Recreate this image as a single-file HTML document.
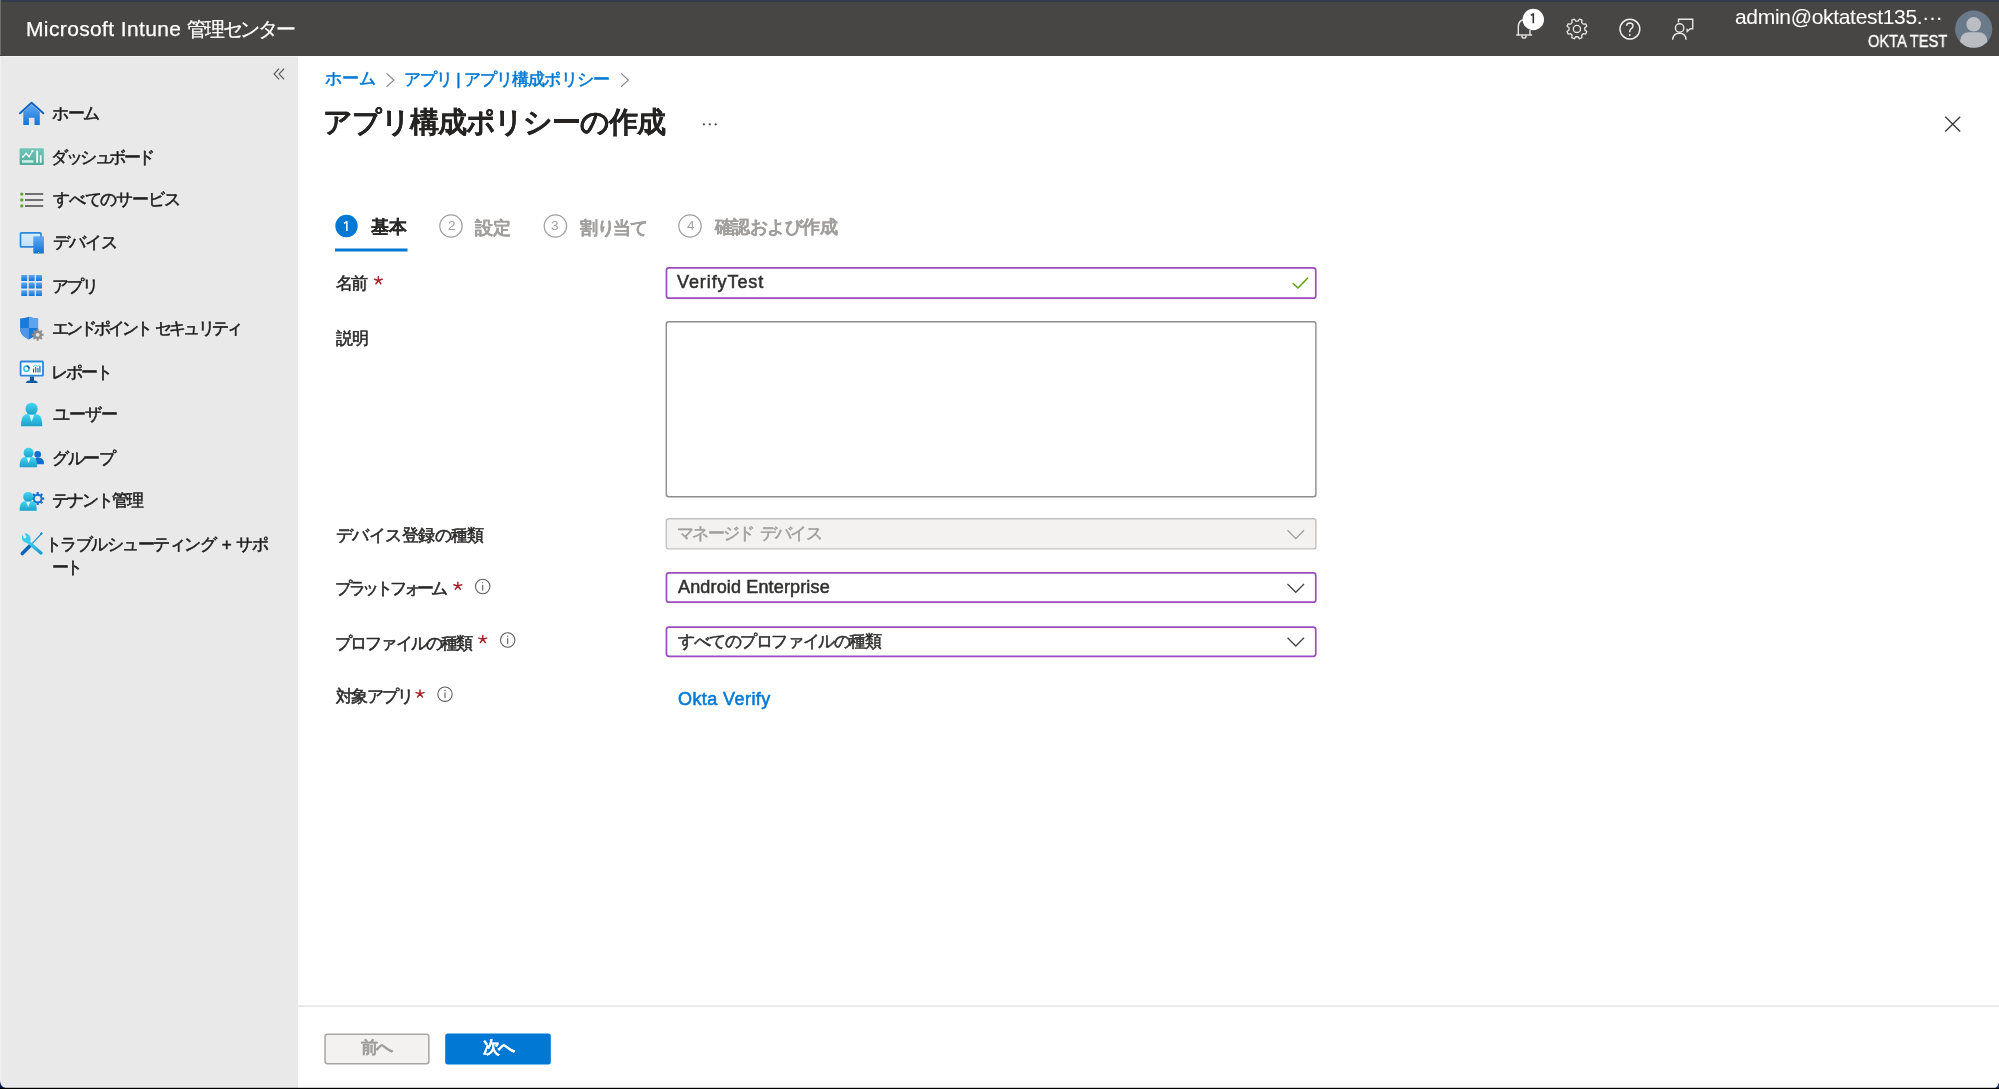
<!DOCTYPE html>
<html lang="ja">
<head>
<meta charset="utf-8">
<style>
html,body{margin:0;padding:0;}
body{width:1999px;height:1089px;overflow:hidden;position:relative;background:#fff;font-family:"Liberation Sans",sans-serif;color:#323130;}
.a{position:absolute;white-space:nowrap;line-height:1;will-change:transform;-webkit-text-stroke:0.55px currentColor;}
.s{position:absolute;}
.box{position:absolute;box-sizing:border-box;border-radius:2px;}
.pbox{border:1.8px solid #9c4cbe;background:#fff;border-radius:3px;}
</style>
</head>
<body>
<div class="s" style="left:0;top:0;width:1999px;height:55.5px;background:#484644;"></div>
<div class="s" style="left:0;top:0;width:1999px;height:2px;background:#343b4c;"></div>
<div class="s" style="left:0;top:0;width:1px;height:55px;background:#706f6e;"></div>
<div class="s" style="left:0;top:55.5px;width:298px;height:1034px;background:#e9e9e9;"></div>
<div class="s" style="left:0;top:55.5px;width:298px;height:1px;background:#f2f2f2;"></div>
<!-- form boxes: see svg -->
<svg class="s" style="left:0;top:0" width="1999" height="1089" viewBox="0 0 1999 1089">
<defs>
 <linearGradient id="gBlue" x1="0" y1="0" x2="0" y2="1"><stop offset="0" stop-color="#62a8f2"/><stop offset="1" stop-color="#0f74d6"/></linearGradient>
 <linearGradient id="gTeal" x1="0" y1="0" x2="0" y2="1"><stop offset="0" stop-color="#70c8b8"/><stop offset="1" stop-color="#52aa9b"/></linearGradient>
 <linearGradient id="gCyan" x1="0" y1="0" x2="0" y2="1"><stop offset="0" stop-color="#44d6f2"/><stop offset="1" stop-color="#1c9fcb"/></linearGradient>
 <linearGradient id="gLight" x1="0" y1="0" x2="0" y2="1"><stop offset="0" stop-color="#d8eefc"/><stop offset="1" stop-color="#c2e0f8"/></linearGradient>
</defs>
<!-- form boxes -->
<rect x="666.45" y="267.85" width="649.30" height="30.30" rx="2.5" fill="#fff" stroke="#9c4cbe" stroke-width="1.7"/>
<rect x="666.30" y="321.70" width="649.60" height="175.10" rx="2.5" fill="#fff" stroke="#8f8d8b" stroke-width="1.4"/>
<rect x="666.30" y="518.70" width="649.60" height="30.20" rx="2.5" fill="#f3f2f1" stroke="#c3c1bf" stroke-width="1.4"/>
<rect x="666.45" y="572.85" width="649.30" height="29.30" rx="2.5" fill="#fff" stroke="#9c4cbe" stroke-width="1.7"/>
<rect x="666.45" y="627.05" width="649.30" height="29.30" rx="2.5" fill="#fff" stroke="#9c4cbe" stroke-width="1.7"/>
<rect x="298" y="1005.3" width="1701" height="1.6" fill="#e6e4e2"/>
<rect x="325.05" y="1034.15" width="103.80" height="29.70" rx="2.5" fill="#f3f2f1" stroke="#a8a6a4" stroke-width="1.5"/>
<rect x="445.2" y="1033.4" width="105.6" height="31.2" rx="2.5" fill="#0078d4"/>
<!-- sidebar collapse << -->
<g fill="none" stroke="#605e5c" stroke-width="1.1" stroke-linecap="round">
 <path d="M278.8 69 L274 74 L278.8 79"/><path d="M283.8 69 L279 74 L283.8 79"/>
</g>
<!-- home -->
<path d="M23.3 112 L23.3 125.1 L39.8 125.1 L39.8 112 L31.6 104.5 Z" fill="url(#gBlue)"/>
<path d="M20 113.3 L31.6 102.8 L43.3 113.3" fill="none" stroke="#0b63c1" stroke-width="1.9" stroke-linejoin="round" stroke-linecap="round"/>
<rect x="28.9" y="117.8" width="5.6" height="7.4" fill="#e4e4e4"/>
<!-- dashboard -->
<rect x="19.6" y="148.2" width="24.2" height="16.9" rx="1" fill="url(#gTeal)"/>
<polyline points="22.9,156.8 26.2,153.5 29.2,156.5 32.5,150.9" fill="none" stroke="#fff" stroke-width="1.1"/>
<g fill="#fff"><circle cx="22.9" cy="156.8" r="1"/><circle cx="26.2" cy="153.5" r="1"/><circle cx="29.2" cy="156.5" r="1"/><circle cx="32.5" cy="150.9" r="1"/></g>
<rect x="22" y="160.1" width="11.5" height="2.7" fill="#c9ebe5"/>
<rect x="36.2" y="150.6" width="1.9" height="12.2" fill="#f4fbfa"/>
<rect x="39.8" y="155.2" width="1.8" height="7.6" fill="#f4fbfa"/>
<!-- all services list -->
<g fill="#5fa82e"><circle cx="21.8" cy="194.1" r="1.7"/><circle cx="21.8" cy="200" r="1.7"/><circle cx="21.8" cy="205.9" r="1.7"/></g>
<g stroke="#707070" stroke-width="2"><path d="M25 194.1H43.2M25 200H43.2M25 205.9H43.2"/></g>
<!-- devices -->
<rect x="20.5" y="232.9" width="20.5" height="14" rx="1" fill="url(#gLight)" stroke="#2a87dc" stroke-width="1.7"/>
<rect x="33.3" y="236.2" width="10.6" height="17.3" rx="0.6" fill="url(#gBlue)"/>
<circle cx="38.6" cy="252.5" r="0.6" fill="#fff"/>
<!-- apps grid -->
<g fill="url(#gBlue)">
<rect x="21.3" y="274.9" width="5.9" height="6" rx="0.5"/><rect x="28.7" y="274.9" width="6" height="6" rx="0.5"/><rect x="36" y="274.9" width="6" height="6" rx="0.5"/>
<rect x="21.3" y="282.6" width="5.9" height="5.9" rx="0.5"/><rect x="28.7" y="282.6" width="6" height="5.9" rx="0.5"/><rect x="36" y="282.6" width="6" height="5.9" rx="0.5"/>
<rect x="21.3" y="290.2" width="5.9" height="5.9" rx="0.5"/><rect x="28.7" y="290.2" width="6" height="5.9" rx="0.5"/><rect x="36" y="290.2" width="6" height="5.9" rx="0.5"/>
</g>
<!-- shield -->
<path d="M20.1 318.6 Q24.5 318.6 28.9 316.8 Q33.3 318.6 38.1 318.6 L38.1 329 Q38 335.5 28.9 339.5 Q20.2 335.5 20.1 329 Z" fill="#1a7ad9"/>
<path d="M28.9 316.8 Q33.3 318.6 38.1 318.6 L38.1 328 L28.9 328 Z" fill="#5ea3ec"/>
<path d="M20.1 328 L28.9 328 L28.9 339.5 Q20.2 335.5 20.1 329 Z" fill="#4f97e6"/>
<path d="M36.67 330.52 L36.76 328.87 L38.64 328.87 L38.73 330.52 L40.00 331.05 L41.23 329.95 L42.55 331.27 L41.45 332.50 L41.98 333.77 L43.63 333.86 L43.63 335.74 L41.98 335.83 L41.45 337.10 L42.55 338.33 L41.23 339.65 L40.00 338.55 L38.73 339.08 L38.64 340.73 L36.76 340.73 L36.67 339.08 L35.40 338.55 L34.17 339.65 L32.85 338.33 L33.95 337.10 L33.42 335.83 L31.77 335.74 L31.77 333.86 L33.42 333.77 L33.95 332.50 L32.85 331.27 L34.17 329.95 L35.40 331.05 Z" fill="#8c8c8c"/><circle cx="37.7" cy="334.8" r="1.9" fill="#e9e9e9"/>
<!-- report -->
<rect x="20.6" y="361.5" width="22.4" height="14.2" rx="0.8" fill="#fff" stroke="#2a87dc" stroke-width="1.8"/>
<path d="M29.9 376.5 H34 V380.6 Q37.7 381 37.7 383 H25.9 Q25.9 381 29.9 380.6 Z" fill="#0c5aa6"/>
<circle cx="26.5" cy="368.7" r="2.6" fill="none" stroke="#32c1ec" stroke-width="1.5"/>
<path d="M26.5 366.1 A2.6 2.6 0 0 1 29.1 368.7" fill="none" stroke="#0a5aa6" stroke-width="1.5"/>
<g fill="#0c5aa6"><rect x="33" y="368.5" width="1.1" height="4"/><rect x="35.2" y="367" width="1.1" height="5.5"/><rect x="37.4" y="368" width="1.1" height="4.5"/><rect x="39.4" y="366" width="1.1" height="6.5"/></g>
<path d="M33 367 L35.5 365 L37.8 366.5 L40 364.3" fill="none" stroke="#32c1ec" stroke-width="0.9"/>
<!-- user -->
<circle cx="31.6" cy="408.9" r="6.1" fill="url(#gCyan)"/>
<path d="M21.1 426.2 L21.1 423 Q21.5 414.5 27.5 414 L35.7 414 Q41.8 414.5 42.2 423 L42.2 426.2 Z" fill="url(#gCyan)"/>
<path d="M29.2 415 L34 415 L31.6 421.8 Z" fill="#e4f8fd"/>
<!-- groups -->
<circle cx="37.7" cy="454.4" r="3.3" fill="#0f6fd0"/>
<path d="M34.3 464.2 L34.3 462 Q34.8 457.8 37 457.8 L39.5 457.8 Q43.5 458.2 43.9 462.5 L43.9 464.2 Z" fill="#0f6fd0"/>
<circle cx="28.6" cy="452.7" r="5" fill="url(#gCyan)"/>
<path d="M19.7 467.3 L19.7 464 Q20.2 457.3 25 457 L32 457 Q36.7 457.5 37.1 464 L37.1 467.3 Z" fill="url(#gCyan)"/>
<path d="M26.6 457.8 L30.6 457.8 L28.6 463 Z" fill="#e4f8fd"/>
<!-- tenant -->
<path d="M36.58 493.93 L36.67 492.08 L38.73 492.08 L38.82 493.93 L40.21 494.51 L41.58 493.26 L43.04 494.72 L41.79 496.09 L42.37 497.48 L44.22 497.57 L44.22 499.63 L42.37 499.72 L41.79 501.11 L43.04 502.48 L41.58 503.94 L40.21 502.69 L38.82 503.27 L38.73 505.12 L36.67 505.12 L36.58 503.27 L35.19 502.69 L33.82 503.94 L32.36 502.48 L33.61 501.11 L33.03 499.72 L31.18 499.63 L31.18 497.57 L33.03 497.48 L33.61 496.09 L32.36 494.72 L33.82 493.26 L35.19 494.51 Z" fill="#0f6fd0"/><circle cx="37.7" cy="498.6" r="2.9" fill="#e9e9e9"/>
<circle cx="28.2" cy="496.9" r="5" fill="url(#gCyan)"/>
<path d="M19.7 510.8 L19.7 508 Q20.2 501.6 25 501.3 L32 501.3 Q36.3 501.8 36.7 508 L36.7 510.8 Z" fill="url(#gCyan)"/>
<path d="M26.2 502 L30.2 502 L28.2 507 Z" fill="#e4f8fd"/>
<!-- tools -->
<path d="M30.5 545.3 L22.3 553.5" stroke="#0f64b8" stroke-width="3.6" stroke-linecap="round"/>
<path d="M31 544.8 L41.6 533.5" stroke="#1e8fcf" stroke-width="1.1"/>
<path d="M40.5 534.3 L42.2 532.8" stroke="#1e8fcf" stroke-width="2"/>
<path d="M26.5 540.5 L41 553" stroke="url(#gCyan)" stroke-width="3.3" stroke-linecap="round"/>
<path d="M22.5 534.5 Q21 539 23.5 541.5 Q26.5 544 30 542 Q31.5 538.5 29.5 535.5 Q27.2 533 24.5 533.2 L26.5 536.8 L25.5 538.5 L23.7 538.3 Z" fill="#3bcdef"/>

<!-- breadcrumb chevrons -->
<g fill="none" stroke="#8a8886" stroke-width="1.2">
<path d="M386.6 73.4 L393.8 80.1 L386.6 86.7"/><path d="M621.1 73.4 L628.3 80.1 L621.1 86.7"/>
</g>
<!-- title ellipsis -->
<g fill="#4a4948"><circle cx="703.9" cy="124.3" r="1.15"/><circle cx="709.8" cy="124.3" r="1.15"/><circle cx="715.7" cy="124.3" r="1.15"/></g>
<!-- close X -->
<path d="M1945.3 116.7 L1960.2 131.6 M1960.2 116.7 L1945.3 131.6" stroke="#3c3b3a" stroke-width="1.35"/>

<!-- tabs -->
<circle cx="346.5" cy="226" r="11.2" fill="#0078d4"/>
<circle cx="451" cy="226" r="11.2" fill="none" stroke="#a19f9d" stroke-width="1.2"/>
<circle cx="555.4" cy="226" r="11.2" fill="none" stroke="#a19f9d" stroke-width="1.2"/>
<circle cx="690" cy="226" r="11.2" fill="none" stroke="#a19f9d" stroke-width="1.2"/>
<rect x="335" y="248.5" width="72.5" height="3" fill="#0078d4"/>

<!-- check -->
<path d="M1292.8 283.2 L1298 288 L1308 277.8" fill="none" stroke="#57a300" stroke-width="1.5"/>
<!-- chevrons -->
<path d="M1287.5 530.3 L1295.8 538.6 L1304 530.3" fill="none" stroke="#a19f9d" stroke-width="1.3"/>
<path d="M1287.5 584 L1295.8 592.3 L1304 584" fill="none" stroke="#444" stroke-width="1.25"/>
<path d="M1287.5 637.7 L1295.8 646 L1304 637.7" fill="none" stroke="#444" stroke-width="1.25"/>

<!-- info icons -->
<g fill="none" stroke="#605e5c" stroke-width="1.1">
<circle cx="482.7" cy="586.5" r="7.2"/><circle cx="507.7" cy="640" r="7.2"/><circle cx="445" cy="694.2" r="7.2"/>
</g>
<g stroke="#605e5c" stroke-width="1.1"><path d="M482.7 584.8V590.6M507.7 638.3V644.1M445 692.5V698.3"/></g>
<g fill="#605e5c"><circle cx="482.7" cy="582.6" r="0.7"/><circle cx="507.7" cy="636.1" r="0.7"/><circle cx="445" cy="690.3" r="0.7"/></g>

<!-- header icons -->
<g fill="none" stroke="#e8e8e8" stroke-width="1.4">
<path d="M1518.3 35 V27 Q1518.3 20.5 1524 19.5"/>
<path d="M1530 30 V35"/>
<path d="M1516.2 35 H1532.1"/>
<path d="M1521.8 35.6 Q1522 38.1 1524 38.1 Q1526 38.1 1526.2 35.6"/>
</g>
<circle cx="1533.3" cy="19.5" r="10.7" fill="#fff"/>
<path d="M1577.95 21.07 L1579.51 19.04 L1582.02 20.08 L1581.69 22.62 L1583.18 24.11 L1585.72 23.78 L1586.76 26.29 L1584.73 27.85 L1584.73 29.95 L1586.76 31.51 L1585.72 34.02 L1583.18 33.69 L1581.69 35.18 L1582.02 37.72 L1579.51 38.76 L1577.95 36.73 L1575.85 36.73 L1574.29 38.76 L1571.78 37.72 L1572.11 35.18 L1570.62 33.69 L1568.08 34.02 L1567.04 31.51 L1569.07 29.95 L1569.07 27.85 L1567.04 26.29 L1568.08 23.78 L1570.62 24.11 L1572.11 22.62 L1571.78 20.08 L1574.29 19.04 L1575.85 21.07 Z" fill="none" stroke="#e6e6e6" stroke-width="1.3" stroke-linejoin="round"/>
<circle cx="1576.9" cy="28.9" r="3.6" fill="none" stroke="#e6e6e6" stroke-width="1.3"/>
<circle cx="1629.9" cy="29.1" r="9.9" fill="none" stroke="#ececec" stroke-width="1.5"/>
<path d="M1626.6 25.8 Q1626.8 23 1629.8 23 Q1633 23.1 1633 25.8 Q1633 27.8 1630.8 29 Q1629.7 29.8 1629.7 32.3" fill="none" stroke="#ececec" stroke-width="1.5"/>
<circle cx="1629.7" cy="35" r="0.95" fill="#ececec"/>
<g fill="none" stroke="#e6e6e6" stroke-width="1.4">
<path d="M1678.5 22.5 V19.2 H1692.7 V28.7 H1690.3 L1687.2 31.5 V28.7"/>
<circle cx="1679.6" cy="28" r="4.2"/>
<path d="M1672.6 39.7 Q1673.2 33.2 1679.6 33.2 Q1685.6 33.2 1686.1 39.7"/>
</g>
<!-- avatar -->
<circle cx="1973.7" cy="29.2" r="18.6" fill="#6b7a8b"/>
<clipPath id="avc"><circle cx="1973.7" cy="29.2" r="18.6"/></clipPath>
<g clip-path="url(#avc)" fill="#babec3">
<circle cx="1973.7" cy="24.3" r="7.3"/>
<path d="M1960 49 L1960 41 Q1961 32.5 1969 32.3 L1978.4 32.3 Q1986.5 32.5 1987.5 41 L1987.5 49 Z"/>
</g>
<path d="M344 223.3 L346.9 221.6 V231" fill="none" stroke="#fff" stroke-width="1.5" stroke-linejoin="round"/>
<path d="M1530.8 15.4 L1533.3 13.9 V23.2" fill="none" stroke="#323130" stroke-width="1.6" stroke-linejoin="round"/>
<!-- required stars -->
<g fill="none" stroke="#a4262c" stroke-width="1.5" stroke-linecap="round">
<path d="M378.4 280.5L378.4 276.7M378.4 280.5L374.5 279.3M378.4 280.5L382.3 279.3M378.4 280.5L375.9 283.7M378.4 280.5L380.9 283.7"/>
<path d="M457.8 586.0L457.8 582.2M457.8 586.0L453.9 584.8M457.8 586.0L461.7 584.8M457.8 586.0L455.3 589.2M457.8 586.0L460.3 589.2"/>
<path d="M482.8 639.3L482.8 635.5M482.8 639.3L478.9 638.1M482.8 639.3L486.7 638.1M482.8 639.3L480.3 642.5M482.8 639.3L485.3 642.5"/>
<path d="M420.0 693.8L420.0 690.0M420.0 693.8L416.1 692.6M420.0 693.8L423.9 692.6M420.0 693.8L417.5 697.0M420.0 693.8L422.5 697.0"/>
</g>
</svg>
<div class="a" id="brandL" style="left:26.00px;top:17.70px;font-size:21px;letter-spacing:0.373px;color:#fff;-webkit-text-stroke:0.25px currentColor;">Microsoft Intune</div>
<div class="a" id="brandJ" style="left:187.00px;top:19.30px;font-size:20px;letter-spacing:-2.200px;color:#fff;-webkit-text-stroke:0.3px currentColor;">管理センター</div>
<div class="a" id="email" style="left:1735.00px;top:5.80px;font-size:21px;letter-spacing:-0.310px;color:#fff;-webkit-text-stroke:0.05px currentColor;">admin@oktatest135.···</div>
<div class="a" id="okta" style="left:1868.00px;top:33.40px;font-size:16.5px;letter-spacing:0.000px;transform:scaleX(0.8879);transform-origin:0 0;color:#fff;-webkit-text-stroke:0.4px currentColor;">OKTA TEST</div>
<div class="a" id="bc1" style="left:324.50px;top:70.10px;font-size:17px;letter-spacing:0.000px;color:#0078d4;">ホーム</div>
<div class="a" id="bc2" style="left:404.00px;top:70.50px;font-size:17px;letter-spacing:-0.857px;color:#0078d4;">アプリ | アプリ構成ポリシー</div>
<div class="a" id="title" style="left:322.50px;top:108.30px;font-size:29px;letter-spacing:-1.091px;color:#252423;font-weight:bold;-webkit-text-stroke:0.1px currentColor;">アプリ構成ポリシーの作成</div>
<div class="a" id="tab1" style="left:371.00px;top:218.40px;font-size:18px;letter-spacing:0.000px;color:#292827;font-weight:bold;-webkit-text-stroke:0.1px currentColor;">基本</div>
<div class="a" id="tab2" style="left:475.00px;top:219.00px;font-size:18px;letter-spacing:0.000px;color:#a19f9d;font-weight:bold;-webkit-text-stroke:0.1px currentColor;">設定</div>
<div class="a" id="tab3" style="left:579.50px;top:218.50px;font-size:18px;letter-spacing:-1.333px;color:#a19f9d;font-weight:bold;-webkit-text-stroke:0.1px currentColor;">割り当て</div>
<div class="a" id="tab4" style="left:714.50px;top:218.00px;font-size:18px;letter-spacing:-0.567px;color:#a19f9d;font-weight:bold;-webkit-text-stroke:0.1px currentColor;">確認および作成</div>
<div class="a" id="lbl1" style="left:335.50px;top:274.50px;font-size:17px;letter-spacing:-2.000px;color:#2a2928;">名前</div>
<div class="a" id="lbl2" style="left:335.50px;top:329.50px;font-size:17px;letter-spacing:-1.000px;color:#2a2928;">説明</div>
<div class="a" id="lbl3" style="left:335.50px;top:526.50px;font-size:17px;letter-spacing:-0.575px;color:#2a2928;">デバイス登録の種類</div>
<div class="a" id="lbl4" style="left:334.50px;top:580.00px;font-size:17px;letter-spacing:-3.286px;color:#2a2928;">プラットフォーム</div>
<div class="a" id="lbl5" style="left:334.50px;top:634.50px;font-size:17px;letter-spacing:-1.875px;color:#2a2928;">プロファイルの種類</div>
<div class="a" id="lbl6" style="left:335.50px;top:687.50px;font-size:17px;letter-spacing:-1.750px;color:#2a2928;">対象アプリ</div>
<div class="a" id="val1" style="left:677.00px;top:273.20px;font-size:18px;letter-spacing:0.911px;color:#323130;">VerifyTest</div>
<div class="a" id="val3" style="left:676.50px;top:524.80px;font-size:17px;letter-spacing:-1.689px;word-spacing:3px;color:#a19f9d;">マネージド デバイス</div>
<div class="a" id="val4" style="left:677.50px;top:578.20px;font-size:18px;letter-spacing:0.153px;color:#323130;">Android Enterprise</div>
<div class="a" id="val5" style="left:677.50px;top:632.60px;font-size:17px;letter-spacing:-1.417px;color:#323130;">すべてのプロファイルの種類</div>
<div class="a" id="val6" style="left:677.50px;top:689.50px;font-size:18px;letter-spacing:0.420px;color:#0078d4;">Okta Verify</div>
<div class="a" id="btn1" style="left:361.00px;top:1039.00px;font-size:17px;letter-spacing:-1.800px;color:#a19f9d;font-weight:bold;-webkit-text-stroke:0.1px currentColor;">前へ</div>
<div class="a" id="btn2" style="left:482.50px;top:1039.00px;font-size:17px;letter-spacing:-2.000px;color:#fff;font-weight:bold;-webkit-text-stroke:0.1px currentColor;">次へ</div>
<div class="a" id="nav0" style="left:52.00px;top:104.90px;font-size:17px;letter-spacing:-1.500px;color:#1e1e1e;">ホーム</div>
<div class="a" id="nav1" style="left:51.00px;top:148.60px;font-size:17px;letter-spacing:-2.500px;color:#1e1e1e;">ダッシュボード</div>
<div class="a" id="nav2" style="left:52.50px;top:191.00px;font-size:17px;letter-spacing:-1.171px;color:#1e1e1e;">すべてのサービス</div>
<div class="a" id="nav3" style="left:52.50px;top:234.40px;font-size:17px;letter-spacing:-1.000px;color:#1e1e1e;">デバイス</div>
<div class="a" id="nav4" style="left:51.50px;top:278.40px;font-size:17px;letter-spacing:-2.200px;color:#1e1e1e;">アプリ</div>
<div class="a" id="nav5" style="left:51.50px;top:320.20px;font-size:17px;letter-spacing:-2.923px;word-spacing:3px;color:#1e1e1e;">エンドポイント セキュリティ</div>
<div class="a" id="nav6" style="left:50.50px;top:363.80px;font-size:17px;letter-spacing:-1.867px;color:#1e1e1e;">レポート</div>
<div class="a" id="nav7" style="left:52.50px;top:406.20px;font-size:17px;letter-spacing:-1.133px;color:#1e1e1e;">ユーザー</div>
<div class="a" id="nav8" style="left:51.50px;top:449.70px;font-size:17px;letter-spacing:-1.467px;color:#1e1e1e;">グループ</div>
<div class="a" id="nav9" style="left:51.50px;top:492.40px;font-size:17px;letter-spacing:-2.000px;color:#1e1e1e;">テナント管理</div>
<div class="a" id="nav10" style="left:45.00px;top:536.20px;font-size:17px;letter-spacing:-1.507px;word-spacing:3px;color:#1e1e1e;">トラブルシューティング + サポ</div>
<div class="a" id="nav11" style="left:51.50px;top:559.40px;font-size:17px;letter-spacing:-3.200px;color:#1e1e1e;">ート</div>
<div class="a" id="d2" style="left:447.60px;top:219.20px;font-size:13.5px;letter-spacing:0.000px;color:#a19f9d;-webkit-text-stroke:0;">2</div>
<div class="a" id="d3" style="left:551.00px;top:219.20px;font-size:13.5px;letter-spacing:0.000px;color:#a19f9d;-webkit-text-stroke:0;">3</div>
<div class="a" id="d4" style="left:686.60px;top:219.20px;font-size:13.5px;letter-spacing:0.000px;color:#a19f9d;-webkit-text-stroke:0;">4</div>
<svg class="s" style="left:0;top:0" width="1999" height="1089" viewBox="0 0 1999 1089">
<rect x="0" y="56" width="1" height="1031" fill="#f1f1f1"/>
<path d="M0 1081 Q0.8 1087.2 5.5 1088 L0 1088 Z" fill="#0b1650"/>
<path d="M1999 1082 Q1998 1087.2 1995 1088 L1999 1088 Z" fill="#24306a"/>
<rect x="0" y="1087.8" width="1999" height="1.2" fill="#000"/>
</svg>
</body>
</html>
